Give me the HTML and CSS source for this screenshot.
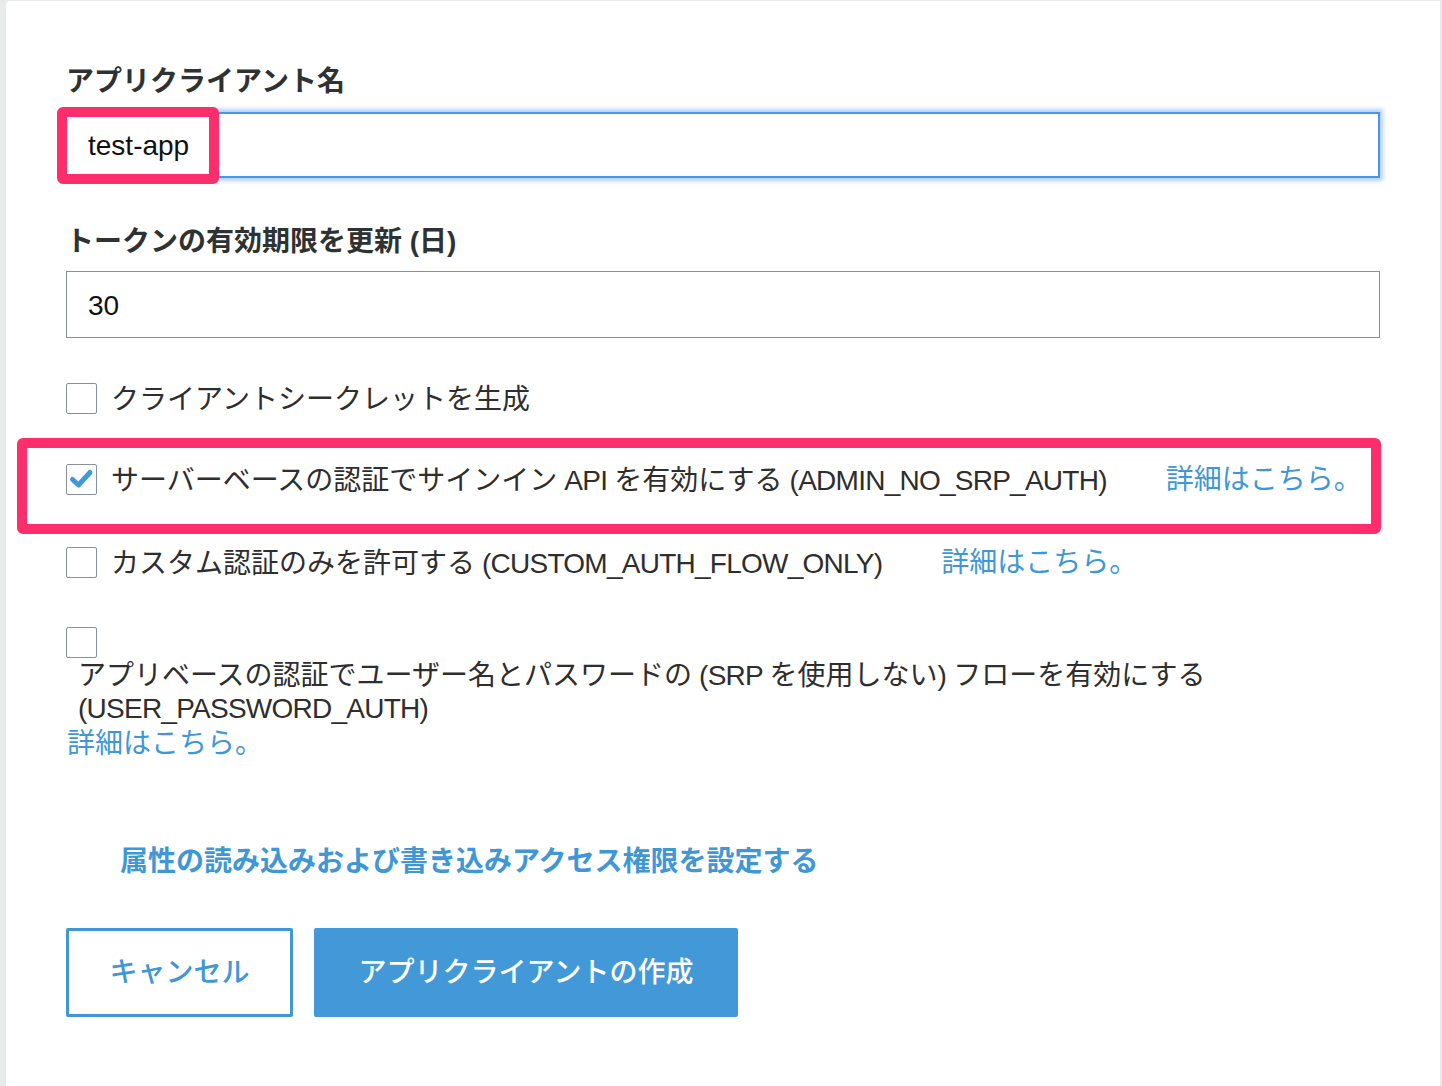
FILE: index.html
```html
<!DOCTYPE html>
<html lang="ja">
<head>
<meta charset="utf-8">
<title>アプリクライアントの作成</title>
<link rel="stylesheet" href="styles.css">
</head>
<body>
<div class="card">
  <div class="field-label">アプリクライアント名</div>
  <div class="input input-focus">test-app</div>

  <div class="field-label label-2">トークンの有効期限を更新 (日)</div>
  <div class="input input-plain">30</div>

  <div class="check-row row-1">
    <span class="checkbox"></span>
    <span class="check-text">クライアントシークレットを生成</span>
  </div>

  <div class="check-row row-2">
    <span class="checkbox checked">
      <svg viewBox="0 0 31 31" width="31" height="31"><path d="M6.5 16.5 L12.5 22 L24 9.5" fill="none" stroke="#3f9ad8" stroke-width="5" stroke-linecap="round" stroke-linejoin="round"/></svg>
    </span>
    <span class="check-text">サーバーベースの認証でサインイン<span class="en"> API </span>を有効にする<span class="en"> (ADMIN_NO_SRP_AUTH)</span></span>
    <a class="more-link">詳細はこちら。</a>
  </div>

  <div class="check-row row-3">
    <span class="checkbox"></span>
    <span class="check-text">カスタム認証のみを許可する<span class="en"> (CUSTOM_AUTH_FLOW_ONLY)</span></span>
    <a class="more-link">詳細はこちら。</a>
  </div>

  <div class="stack-row">
    <span class="checkbox"></span>
    <div class="stack-text">アプリベースの認証でユーザー名とパスワードの<span class="en"> (SRP </span>を使用しない<span class="en">) </span>フローを有効にする<br><span class="en">(USER_PASSWORD_AUTH)</span></div>
    <a class="stack-link">詳細はこちら。</a>
  </div>

  <a class="attr-link">属性の読み込みおよび書き込みアクセス権限を設定する</a>

  <div class="buttons">
    <button class="btn btn-cancel">キャンセル</button>
    <button class="btn btn-primary">アプリクライアントの作成</button>
  </div>

  <div class="mark mark-1"><span class="mark-text">test-app</span></div>
  <div class="mark mark-2"></div>
</div>
</body>
</html>
```

FILE: styles.css
```css
html, body {
  margin: 0;
  padding: 0;
}
body {
  background: #e9eaea;
  font-family: "Liberation Sans", "Noto Sans CJK JP", sans-serif;
  color: #333333;
  width: 1442px;
  height: 1086px;
  overflow: hidden;
}
.card {
  position: relative;
  margin: 1px 2px 0 6px;
  height: 1085px;
  box-sizing: border-box;
  background: #ffffff;
  border-radius: 4px 0 0 0;
  padding: 61px 60px 0 60px;
  display: flex;
  flex-direction: column;
  align-items: flex-start;
}
.field-label {
  font-size: 28px;
  font-weight: bold;
  line-height: 40px;
  height: 40px;
  color: #2f3232;
}
.label-2 {
  margin-top: 42px;
  padding-top: 2px;
  height: 38px;
}
.input {
  box-sizing: border-box;
  width: 1314px;
  font-size: 28px;
  color: #111111;
  padding-left: 21px;
  display: flex;
  align-items: center;
}
.input-focus {
  margin-top: 10px;
  height: 66px;
  border: 2px solid #4a94ec;
  box-shadow: 0 0 4px 3px rgba(100, 168, 248, 0.5);
  margin-left: 1px;
  width: 1313px;
}
.input-plain {
  margin-top: 11px;
  height: 67px;
  border: 1.5px solid #8a9092;
  padding-top: 2px;
}
.en {
  letter-spacing: -0.75px;
}
.check-row {
  display: flex;
  align-items: center;
  height: 40px;
  font-size: 28px;
  line-height: 40px;
}
.row-1 { margin-top: 40px; }
.row-2 { margin-top: 41px; }
.row-3 { margin-top: 43px; }
.checkbox {
  box-sizing: border-box;
  width: 31px;
  height: 31px;
  border: 1.5px solid #879196;
  border-radius: 2px;
  background: #ffffff;
  flex: none;
  position: relative;
}
.checkbox svg {
  position: absolute;
  left: -1.5px;
  top: -1.5px;
}
.check-text {
  margin-left: 14px;
  padding-top: 4px;
  color: #2e2e2e;
  white-space: nowrap;
}
.more-link {
  margin-left: 59px;
  padding-top: 2px;
  color: #3f97d6;
  white-space: nowrap;
}
.stack-row {
  margin-top: 45px;
  display: flex;
  flex-direction: column;
  align-items: flex-start;
  font-size: 28px;
}
.stack-text {
  margin-left: 12px;
  line-height: 33px;
  padding-top: 1px;
  color: #2e2e2e;
}
.stack-link {
  color: #3f97d6;
  line-height: 34px;
  margin-left: 1px;
  margin-top: 2px;
}
.attr-link {
  margin-top: 81px;
  margin-left: 54px;
  font-size: 28px;
  font-weight: bold;
  line-height: 40px;
  color: #3f97d6;
}
.buttons {
  margin-top: 46px;
  display: flex;
  gap: 21px;
}
.btn {
  font-family: "Liberation Sans", "Noto Sans CJK JP", sans-serif;
  font-size: 28px;
  font-weight: 500;
  height: 89px;
  border-radius: 2px;
  box-sizing: border-box;
  padding: 0 0 6px 0;
  cursor: pointer;
}
.btn-cancel {
  width: 227px;
  background: #ffffff;
  border: 3px solid #3f97d6;
  color: #3f97d6;
}
.btn-primary {
  width: 424px;
  background: #4399d7;
  border: none;
  color: #ffffff;
}
.mark {
  position: absolute;
  box-sizing: border-box;
  border: 10px solid #fe2e6c;
  border-radius: 6px;
}
.mark-1 {
  left: 51px;
  top: 106px;
  width: 162px;
  height: 77px;
  background: #ffffff;
  display: flex;
  align-items: center;
  padding-left: 21px;
}
.mark-text {
  font-size: 28px;
  color: #111111;
}
.mark-2 {
  left: 11px;
  top: 437px;
  width: 1364px;
  height: 96px;
}
```
